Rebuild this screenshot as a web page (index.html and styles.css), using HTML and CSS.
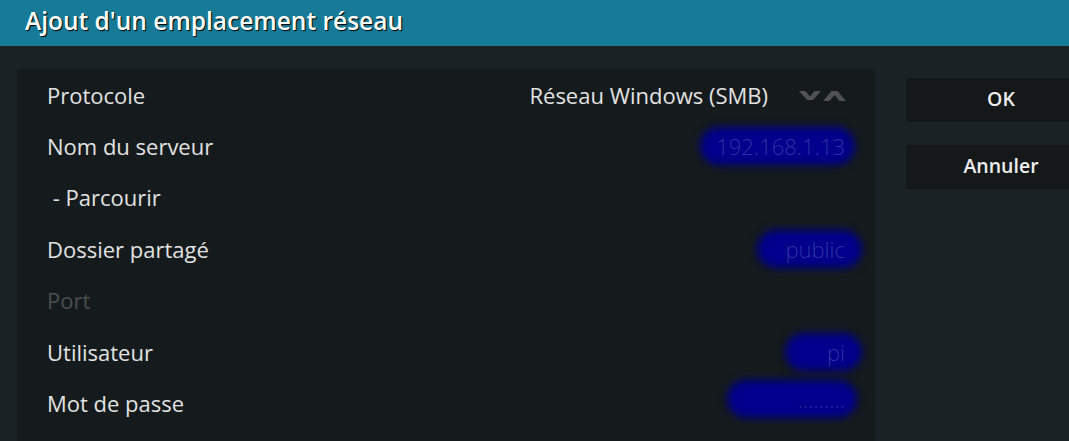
FILE: index.html
```html
<!DOCTYPE html>
<html lang="fr">

<head>
    <meta charset="UTF-8">
    <title>Ajout d'un emplacement réseau</title>
    <link rel="stylesheet" href="styles.css">
</head>

<body>
    <div class="header">
        <h1>Ajout d'un emplacement réseau</h1>
    </div>
    <div class="content">
        <div class="panel">
            <div class="row">
                <span class="label">Protocole</span>
                <div class="value-group">
                    <span class="value">Réseau Windows (SMB)</span>
                    <span class="spinner">
                        <svg width="47" height="14" viewBox="0 0 47 14">
                            <polygon points="0,2 6.5,2 11,7.5 15.5,2 22,2 14,11 8,11" fill="#4f5154"/>
                            <polygon points="24,12 30.5,12 35.5,6 40.5,12 47,12 38.5,2 32.5,2" fill="#4f5154"/>
                        </svg>
                    </span>
                </div>
            </div>
            <div class="row">
                <span class="label">Nom du serveur</span>
                <span class="value redacted r-ip">192.168.1.13</span>
            </div>
            <div class="row">
                <span class="label">&nbsp;- Parcourir</span>
            </div>
            <div class="row">
                <span class="label">Dossier partagé</span>
                <span class="value redacted r-share">public</span>
            </div>
            <div class="row">
                <span class="label disabled">Port</span>
            </div>
            <div class="row">
                <span class="label">Utilisateur</span>
                <span class="value redacted r-user">pi</span>
            </div>
            <div class="row">
                <span class="label">Mot de passe</span>
                <span class="value redacted r-pass">.........</span>
            </div>
        </div>
        <div class="buttons">
            <button class="btn">OK</button>
            <button class="btn">Annuler</button>
        </div>
    </div>
</body>

</html>
```

FILE: styles.css
```css
body {
    margin: 0;
    padding: 0;
    width: 1069px;
    height: 441px;
    overflow: hidden;
    background-color: #1b2225;
    font-family: "Open Sans", "Noto Sans", sans-serif;
    color: #e2e2e2;
}

.header {
    height: 46px;
    background-color: #177b98;
    display: flex;
    align-items: center;
    padding-left: 25px;
}

.header h1 {
    margin: 0;
    margin-top: -5px;
    font-size: 24.5px;
    font-weight: 600;
    color: #ffffff;
    text-shadow: 1px 1px 1px #000000;
}

.content {
    display: flex;
    align-items: flex-start;
    padding-left: 17px;
    padding-top: 23px;
}

.panel {
    width: 858px;
    height: 380px;
    flex-shrink: 0;
    background-color: #151a1c;
    border-radius: 3px;
    box-sizing: border-box;
}

.row {
    height: 51.4px;
    display: flex;
    align-items: center;
    justify-content: space-between;
    padding-left: 30px;
    padding-right: 29px;
    font-size: 22px;
}

.label {
    white-space: pre;
}

.label.disabled {
    color: #4b4d4f;
}

.value-group {
    display: flex;
    align-items: center;
    gap: 31px;
}

.spinner {
    display: flex;
    margin-top: 2px;
}

.redacted {
    position: relative;
    isolation: isolate;
    margin-right: 1px;
    color: rgba(110, 110, 190, 0.45);
    font-weight: 300;
}

.redacted::before {
    content: "";
    position: absolute;
    top: -4px;
    bottom: -4px;
    right: -10px;
    width: 150px;
    background-color: #00008c;
    border-radius: 22px;
    filter: blur(4px);
    z-index: -1;
}

.r-ip::before {
    width: 155px;
}

.r-share::before {
    right: -17px;
    width: 105px;
}

.r-user::before {
    right: -17px;
    width: 77px;
}

.r-pass {
    top: -4px;
    color: rgba(110, 110, 190, 0.35);
}

.r-pass::before {
    right: -12px;
    width: 130px;
}

.buttons {
    display: flex;
    flex-direction: column;
    gap: 23px;
    margin-left: 31px;
    padding-top: 9px;
}

.btn {
    width: 190px;
    height: 44px;
    background-color: #151819;
    color: #eeeeee;
    border: none;
    border-radius: 3px;
    font-family: "Open Sans", "Noto Sans", sans-serif;
    font-size: 19.5px;
    font-weight: 600;
    padding: 0;
    padding-bottom: 3px;
}
```
